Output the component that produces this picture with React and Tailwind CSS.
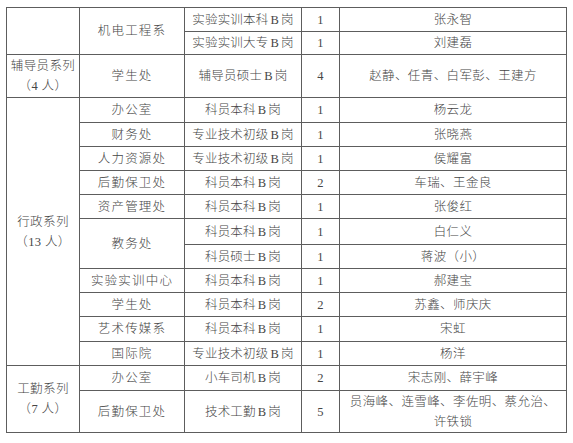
import React from "react";

const cell = "border border-[#5d5d5d] text-center align-middle p-0";
const dept = "border border-[#5d5d5d] text-center align-middle p-0 tracking-[1.2px]";

const Post = ({ t }) => (
  <span className="tracking-[0.2px]">
    {t}
    <span className="px-[2px]">B</span>岗
  </span>
);

const rows = [
  { h: "h-[25px]", post: "科员本科", n: 1, name: "杨云龙", dept: "办公室" },
  { h: "h-[24px]", post: "专业技术初级", n: 1, name: "张晓燕", dept: "财务处" },
  { h: "h-[24px]", post: "专业技术初级", n: 1, name: "侯耀富", dept: "人力资源处" },
  { h: "h-[24px]", post: "科员本科", n: 2, name: "车瑞、王金良", dept: "后勤保卫处" },
  { h: "h-[24px]", post: "科员本科", n: 1, name: "张俊红", dept: "资产管理处" },
];

const rowsAfter = [
  { h: "h-[24px]", post: "科员本科", n: 1, name: "郝建宝", dept: "实验实训中心" },
  { h: "h-[24px]", post: "科员本科", n: 2, name: "苏鑫、师庆庆", dept: "学生处" },
  { h: "h-[25px]", post: "科员本科", n: 1, name: "宋虹", dept: "艺术传媒系" },
  { h: "h-[24px]", post: "专业技术初级", n: 1, name: "杨洋", dept: "国际院" },
];

export default function App() {
  return (
    <div
      className="w-[573px] h-[443px] bg-white overflow-hidden pt-[7px] pl-[6px] text-[#464646] text-[12.5px] tracking-[0.4px] leading-[20px]"
      style={{ fontFamily: '"Liberation Serif", "Noto Sans CJK SC", serif' }}
    >
      <table className="border-collapse table-fixed w-[560px] font-light">
        <colgroup>
          <col className="w-[73px]" />
          <col className="w-[105px]" />
          <col className="w-[117px]" />
          <col className="w-[38px]" />
          <col className="w-[227px]" />
        </colgroup>
        <tbody>
          <tr className="h-[24px]">
            <td rowSpan={2} className={cell}></td>
            <td rowSpan={2} className={dept}>机电工程系</td>
            <td className={cell}><Post t="实验实训本科" /></td>
            <td className={cell}>1</td>
            <td className={cell}>张永智</td>
          </tr>
          <tr className="h-[23px]">
            <td className={cell}><Post t="实验实训大专" /></td>
            <td className={cell}>1</td>
            <td className={cell}>刘建磊</td>
          </tr>
          <tr className="h-[43px]">
            <td className={cell}>
              辅导员系列
              <br />
              （4 人）
            </td>
            <td className={dept}>学生处</td>
            <td className={cell}><Post t="辅导员硕士" /></td>
            <td className={cell}>4</td>
            <td className={cell}>赵静、任青、白军彭、王建方</td>
          </tr>
          {rows.map((r, i) => (
            <tr key={r.dept} className={r.h}>
              {i === 0 && (
                <td rowSpan={11} className={cell}>
                  行政系列
                  <br />
                  （13 人）
                </td>
              )}
              <td className={dept}>{r.dept}</td>
              <td className={cell}><Post t={r.post} /></td>
              <td className={cell}>{r.n}</td>
              <td className={cell}>{r.name}</td>
            </tr>
          ))}
          <tr className="h-[26px]">
            <td rowSpan={2} className={dept}>教务处</td>
            <td className={cell}><Post t="科员本科" /></td>
            <td className={cell}>1</td>
            <td className={cell}>白仁义</td>
          </tr>
          <tr className="h-[24px]">
            <td className={cell}><Post t="科员硕士" /></td>
            <td className={cell}>1</td>
            <td className={cell}>蒋波（小）</td>
          </tr>
          {rowsAfter.map((r) => (
            <tr key={r.dept} className={r.h}>
              <td className={dept}>{r.dept}</td>
              <td className={cell}><Post t={r.post} /></td>
              <td className={cell}>{r.n}</td>
              <td className={cell}>{r.name}</td>
            </tr>
          ))}
          <tr className="h-[25px]">
            <td rowSpan={2} className={cell}>
              工勤系列
              <br />
              （7 人）
            </td>
            <td className={dept}>办公室</td>
            <td className={cell}><Post t="小车司机" /></td>
            <td className={cell}>2</td>
            <td className={cell}>宋志刚、薛宇峰</td>
          </tr>
          <tr className="h-[42px]">
            <td className={dept}>后勤保卫处</td>
            <td className={cell}><Post t="技术工勤" /></td>
            <td className={cell}>5</td>
            <td className={cell}>
              员海峰、连雪峰、李佐明、蔡允治、
              <br />
              许铁锁
            </td>
          </tr>
        </tbody>
      </table>
    </div>
  );
}
